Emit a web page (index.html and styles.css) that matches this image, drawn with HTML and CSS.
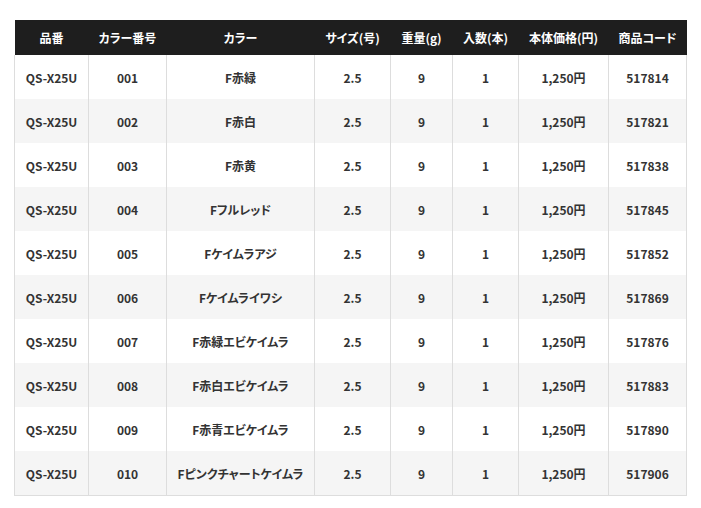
FILE: index.html
```html
<!DOCTYPE html>
<html lang="ja">
<head>
<meta charset="utf-8">
<link rel="stylesheet" href="styles.css">
</head>
<body>
<table class="spec">
<colgroup>
<col class="c1"><col class="c2"><col class="c3"><col class="c4"><col class="c5"><col class="c6"><col class="c7"><col class="c8">
</colgroup>
<thead>
<tr><th>品番</th><th>カラー番号</th><th>カラー</th><th>サイズ(号)</th><th>重量(g)</th><th>入数(本)</th><th>本体価格(円)</th><th>商品コード</th></tr>
</thead>
<tbody>
<tr><td>QS-X25U</td><td>001</td><td>F赤緑</td><td>2.5</td><td>9</td><td>1</td><td>1,250円</td><td>517814</td></tr>
<tr><td>QS-X25U</td><td>002</td><td>F赤白</td><td>2.5</td><td>9</td><td>1</td><td>1,250円</td><td>517821</td></tr>
<tr><td>QS-X25U</td><td>003</td><td>F赤黄</td><td>2.5</td><td>9</td><td>1</td><td>1,250円</td><td>517838</td></tr>
<tr><td>QS-X25U</td><td>004</td><td>Fフルレッド</td><td>2.5</td><td>9</td><td>1</td><td>1,250円</td><td>517845</td></tr>
<tr><td>QS-X25U</td><td>005</td><td>Fケイムラアジ</td><td>2.5</td><td>9</td><td>1</td><td>1,250円</td><td>517852</td></tr>
<tr><td>QS-X25U</td><td>006</td><td>Fケイムライワシ</td><td>2.5</td><td>9</td><td>1</td><td>1,250円</td><td>517869</td></tr>
<tr><td>QS-X25U</td><td>007</td><td>F赤緑エビケイムラ</td><td>2.5</td><td>9</td><td>1</td><td>1,250円</td><td>517876</td></tr>
<tr><td>QS-X25U</td><td>008</td><td>F赤白エビケイムラ</td><td>2.5</td><td>9</td><td>1</td><td>1,250円</td><td>517883</td></tr>
<tr><td>QS-X25U</td><td>009</td><td>F赤青エビケイムラ</td><td>2.5</td><td>9</td><td>1</td><td>1,250円</td><td>517890</td></tr>
<tr><td>QS-X25U</td><td>010</td><td>Fピンクチャートケイムラ</td><td>2.5</td><td>9</td><td>1</td><td>1,250円</td><td>517906</td></tr>
</tbody>
</table>
</body>
</html>
```
FILE: styles.css
```css
html, body {
  margin: 0;
  padding: 0;
  background: #fff;
}
body {
  padding: 20px 0 0 14px;
  font-family: "Noto Sans CJK JP", "Noto Sans", sans-serif;
  font-weight: 700;
  font-size: 12px;
  color: #333;
  font-feature-settings: "palt";
}
.spec {
  border-collapse: collapse;
  table-layout: fixed;
  width: 672px;
}
.c1 { width: 74px; }
.c2 { width: 78px; }
.c3 { width: 148px; }
.c4 { width: 76px; }
.c5 { width: 62px; }
.c6 { width: 66px; }
.c7 { width: 90px; }
.c8 { width: 78px; }
.spec th {
  background: #1e1e1e;
  color: #fff;
  height: 35px;
  padding: 0;
  font-weight: 700;
  text-align: center;
  vertical-align: middle;
}
.spec td {
  height: 44px;
  padding: 0;
  text-align: center;
  vertical-align: middle;
  border-left: 1px solid #ddd;
  border-right: 1px solid #ddd;
}
.spec tbody tr:nth-child(even) td {
  background: #f5f5f5;
}
.spec tbody tr:last-child td {
  border-bottom: 1px solid #ddd;
}
```
